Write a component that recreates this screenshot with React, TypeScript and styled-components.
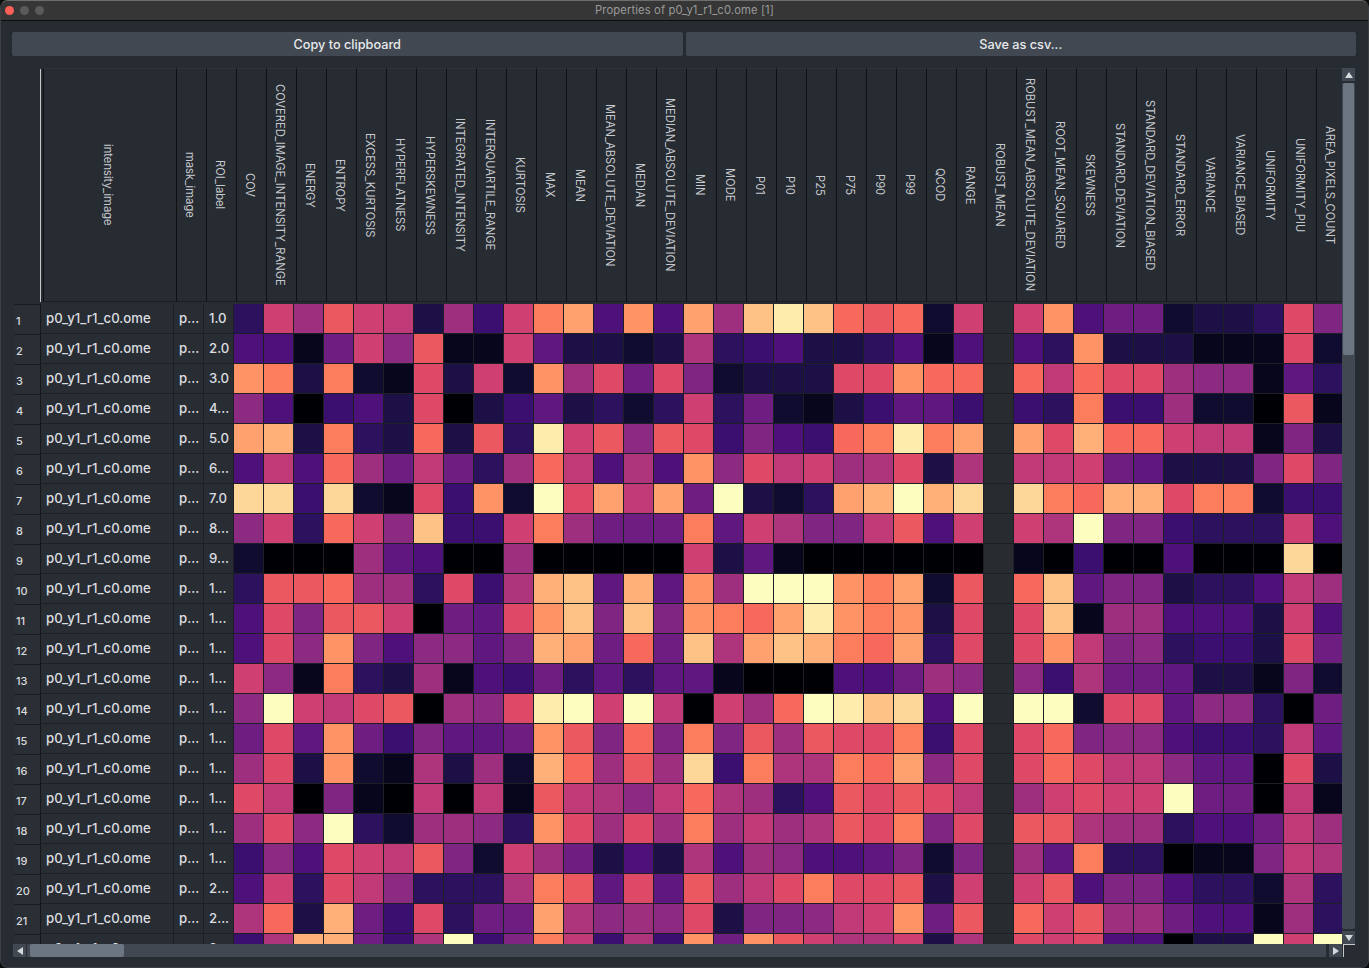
import React from "react";
import styled, { createGlobalStyle } from "styled-components";

const COLORS: Record<string, string> = {
  a: "#000004", b: "#07061c", c: "#100c2f", d: "#1d1046", e: "#2c115f", f: "#3b0f70",
  g: "#4d1179", h: "#5f187f", i: "#6e1e81", j: "#7f2582", k: "#8c2981", l: "#9e2f7f",
  m: "#ae347b", n: "#bf3a77", o: "#cd4071", p: "#de4968", q: "#ec5860", r: "#f6695c",
  s: "#fc7d5d", t: "#fe9366", u: "#fea16e", v: "#feb078", w: "#fec287", x: "#fdd799",
  y: "#fdecab", z: "#fcfdbf", _: "#282c31",
};

const COLUMNS = [
  "COV", "COVERED_IMAGE_INTENSITY_RANGE", "ENERGY", "ENTROPY", "EXCESS_KURTOSIS", "HYPERFLATNESS",
  "HYPERSKEWNESS", "INTEGRATED_INTENSITY", "INTERQUARTILE_RANGE", "KURTOSIS", "MAX", "MEAN",
  "MEAN_ABSOLUTE_DEVIATION", "MEDIAN", "MEDIAN_ABSOLUTE_DEVIATION", "MIN", "MODE", "P01", "P10",
  "P25", "P75", "P90", "P99", "QCOD", "RANGE", "ROBUST_MEAN", "ROBUST_MEAN_ABSOLUTE_DEVIATION",
  "ROOT_MEAN_SQUARED", "SKEWNESS", "STANDARD_DEVIATION", "STANDARD_DEVIATION_BIASED",
  "STANDARD_ERROR", "VARIANCE", "VARIANCE_BIASED", "UNIFORMITY", "UNIFORMITY_PIU", "AREA_PIXELS_COUNT",
];

const ROWS: [string, string][] = [
  ["1.0", "eolqondlfosugtgulwywrqrco_otgiicddepj"],
  ["2.0", "ggbiokqbbohddcdmefgddegbg_getdddbbbpc"],
  ["3.0", "tsdscbpdoctlpipjcdddpptrr_rnrpplkkbhe"],
  ["4...", "kgafgdpadfhdeceoeicbdfhhf_fesfflccaqb"],
  ["5.0", "uvdsedrdqeyoqkqpfjgfrsysu_upvrronnbjd"],
  ["6...", "gngrlinielrngmgtkpnolmpdm_nnoihdddjpj"],
  ["7.0", "xxfxcbpftczpunuizdceuvzvx_xsrvvpsscff"],
  ["8...", "koerokwffosliiishomjjnqgo_omzjjfeeeog"],
  ["9...", "caaalhgaalaaaaaodhbaaaaaa_bafaagaaaxa"],
  ["1...", "eqqrllepfmvwhvhtlzzztsucq_rwhjjdeegnl"],
  ["1...", "gpjqqoaihptwjwjtsruytstdp_pwbllgggdog"],
  ["1...", "gpktjgkkhjvuiriwmuwvsruep_ptnjkeffdpi"],
  ["1...", "okbsedlbgfiehehhbaaaggilk_kfmiihddbjc"],
  ["1...", "kzonpqalkpyzoznaolrzywxgz_zzcpphkkeai"],
  ["1...", "iphtifjhhitqjrjsjqlqppsfp_prjkkgffenh"],
  ["1...", "lpdtcbmdlcvrlqlxfsmmsrukp_prpnnkhhapd"],
  ["1...", "pnajbananbqnmknrmlegqpqpn_lopooziianb"],
  ["1...", "lpkzecllketplplslnlmqpsjp_qqmllegginl"],
  ["1...", "fkgponqjcolidgdmglkgghjcj_lhseeabbjnm"],
  ["2...", "goepnkeeemsqhphqlnpsppqdo_oqgjjgeecme"],
  ["2...", "mrdvifpeiiumklkpdjjknotiq_roqlliggble"],
  ["2...", "fmvvifmzfjsnfmftitqommodm_popggaddzoz"],
];

const GlobalStyle = createGlobalStyle`
  html, body { margin: 0; padding: 0; background: #0c0d0f; overflow: hidden; }
  #root { width: 1369px; height: 968px; }
`;

const Window = styled.div`
  width: 1369px;
  height: 968px;
  box-sizing: border-box;
  display: flex;
  flex-direction: column;
  background: #272b32;
  border-radius: 8px;
  border: 1px solid #3c3f44;
  border-top-color: #6e6e6e;
  overflow: hidden;
  font-family: Inter, "Liberation Sans", sans-serif;
`;

const TitleBar = styled.div`
  position: relative;
  height: 20px;
  flex: none;
  box-sizing: border-box;
  padding-bottom: 2px;
  background: #363636;
  border-bottom: 1px solid #0d0d0d;
  display: flex;
  align-items: center;
  justify-content: center;
`;

const TitleText = styled.span`
  font-size: 11.25px;
  color: #9a9a9a;
  letter-spacing: 0.1px;
`;

const Lights = styled.div`
  position: absolute;
  left: 4px;
  top: 5px;
  display: flex;
  gap: 6px;
`;

const Light = styled.span<{ $c: string }>`
  width: 9px;
  height: 9px;
  border-radius: 50%;
  background: ${(p) => p.$c};
`;

const ButtonBar = styled.div`
  display: flex;
  gap: 3px;
  padding: 11px 12px 12px 11px;
  flex: none;
`;

const ActionButton = styled.button`
  flex: 1;
  height: 24px;
  padding: 0;
  border: none;
  border-radius: 2px;
  background: #414852;
  color: #e8eaec;
  font-family: inherit;
  font-size: 12.7px;
  font-weight: 500;
`;

const TableArea = styled.div`
  display: flex;
  height: 876px;
  flex: none;
  padding-left: 11px;
`;

const TableClip = styled.div`
  width: 1330px;
  height: 876px;
  overflow: hidden;
  flex: none;
`;

const HeaderRow = styled.div`
  display: flex;
  height: 236px;
  width: max-content;
`;

const Corner = styled.div`
  width: 29px;
  height: 233px;
  margin-top: 1px;
  box-sizing: border-box;
  border-right: 1px solid #c8c8c8;
  flex: none;
`;

const HeaderCell = styled.div<{ $w: number }>`
  width: ${(p) => p.$w}px;
  height: 234px;
  box-sizing: border-box;
  flex: none;
  padding-right: 4px;
  border-top: 1px solid #2e3239;
  border-bottom: 1px solid #1b1d21;
  border-left: 1px solid #0e1013;
  display: flex;
  align-items: center;
  justify-content: center;
  font-size: 11.2px;
  color: #c6cacf;
  white-space: nowrap;
`;

const HeaderFirst = styled(HeaderCell)`
  margin-left: 2px;
`;

const VerticalLabel = styled.span`
  writing-mode: vertical-rl;
`;

const Row = styled.div`
  display: flex;
  height: 30px;
  width: max-content;
`;

const RowHead = styled.div`
  width: 27px;
  height: 30px;
  margin-left: 2px;
  flex: none;
  box-sizing: border-box;
  padding: 2px 0 0 2px;
  border-top: 1px solid #1a1c20;
  border-right: 1px solid #15171a;
  background: #2a2e35;
  color: #d8dadd;
  font-size: 11px;
  font-weight: 500;
  display: flex;
  align-items: center;
`;

const TextCell = styled.div<{ $w: number }>`
  width: ${(p) => p.$w}px;
  height: 30px;
  flex: none;
  box-sizing: border-box;
  padding: 0 0 1px 5px;
  border-right: 1px solid #1c1f24;
  border-bottom: 1px solid #1c1f24;
  background: #282c33;
  color: #dcdee0;
  font-size: 13.2px;
  font-weight: 500;
  display: flex;
  align-items: center;
  white-space: nowrap;
  overflow: hidden;
`;

const HeatCell = styled.div<{ $k: string }>`
  width: 30px;
  height: 30px;
  flex: none;
  box-sizing: border-box;
  border-right: 1px solid #1c1f24;
  border-bottom: 1px solid #1c1f24;
  background: ${(p) => COLORS[p.$k]};
`;

const VScroll = styled.div`
  width: 13px;
  height: 876px;
  flex: none;
  display: flex;
  flex-direction: column;
  align-items: stretch;
`;

const ArrowBox = styled.div`
  flex: none;
  width: 13px;
  height: 13px;
  background: #414852;
  display: flex;
  align-items: center;
  justify-content: center;
`;

const VGap = styled.div`
  height: 2px;
  flex: none;
`;

const VTrack = styled.div`
  flex: 1;
  background: #414852;
  border-radius: 0 0 2px 2px;
`;

const VThumb = styled.div`
  height: 272px;
  margin: 0 1px;
  background: #6b7682;
  border-radius: 2px;
`;

const HScroll = styled.div`
  height: 13px;
  flex: none;
  display: flex;
  align-items: stretch;
  padding-left: 12px;
`;

const HTrack = styled.div`
  width: 1299px;
  flex: none;
  margin: 0 3px 0 1px;
  background: #414852;
`;

const HThumb = styled.div`
  width: 94px;
  height: 100%;
  margin-left: 3px;
  background: #6b7682;
  border-radius: 2px;
`;

const ScrollCorner = styled.div`
  width: 12px;
  height: 13px;
  flex: none;
  box-sizing: border-box;
  margin-left: 1px;
  border-top: 1px solid #c8c8c8;
  border-left: 1px solid #c8c8c8;
`;

const Arrow = ({ dir }: { dir: "up" | "down" | "left" | "right" }) => {
  const pts = {
    up: "1,8 9,8 5,2",
    down: "1,2 9,2 5,8",
    left: "8,1 8,9 2,5",
    right: "2,1 2,9 8,5",
  }[dir];
  return (
    <svg width="10" height="10" viewBox="0 0 10 10">
      <polygon points={pts} fill="#d5d8dc" />
    </svg>
  );
};

export default function App() {
  return (
    <>
      <GlobalStyle />
      <Window>
        <TitleBar>
          <Lights>
            <Light $c="#ff5f57" />
            <Light $c="#5a5a5a" />
            <Light $c="#5a5a5a" />
          </Lights>
          <TitleText>Properties of p0_y1_r1_c0.ome [1]</TitleText>
        </TitleBar>
        <ButtonBar>
          <ActionButton>Copy to clipboard</ActionButton>
          <ActionButton>Save as csv...</ActionButton>
        </ButtonBar>
        <TableArea>
          <TableClip>
            <HeaderRow>
              <Corner />
              <HeaderFirst $w={133}>
                <VerticalLabel>intensity_image</VerticalLabel>
              </HeaderFirst>
              <HeaderCell $w={30}>
                <VerticalLabel>mask_image</VerticalLabel>
              </HeaderCell>
              <HeaderCell $w={30}>
                <VerticalLabel>ROI_label</VerticalLabel>
              </HeaderCell>
              {COLUMNS.map((c) => (
                <HeaderCell $w={30} key={c}>
                  <VerticalLabel>{c}</VerticalLabel>
                </HeaderCell>
              ))}
            </HeaderRow>
            {ROWS.map(([roi, cells], i) => (
              <Row key={i}>
                <RowHead>{i + 1}</RowHead>
                <TextCell $w={133}>p0_y1_r1_c0.ome</TextCell>
                <TextCell $w={30}>p...</TextCell>
                <TextCell $w={30}>{roi}</TextCell>
                {cells.split("").map((k, j) => (
                  <HeatCell $k={k} key={j} />
                ))}
              </Row>
            ))}
          </TableClip>
          <VScroll>
            <ArrowBox>
              <Arrow dir="up" />
            </ArrowBox>
            <VGap />
            <VTrack>
              <VThumb />
            </VTrack>
            <VGap />
            <ArrowBox>
              <Arrow dir="down" />
            </ArrowBox>
          </VScroll>
        </TableArea>
        <HScroll>
          <ArrowBox>
            <Arrow dir="left" />
          </ArrowBox>
          <HTrack>
            <HThumb />
          </HTrack>
          <ArrowBox>
            <Arrow dir="right" />
          </ArrowBox>
          <ScrollCorner />
        </HScroll>
      </Window>
    </>
  );
}
